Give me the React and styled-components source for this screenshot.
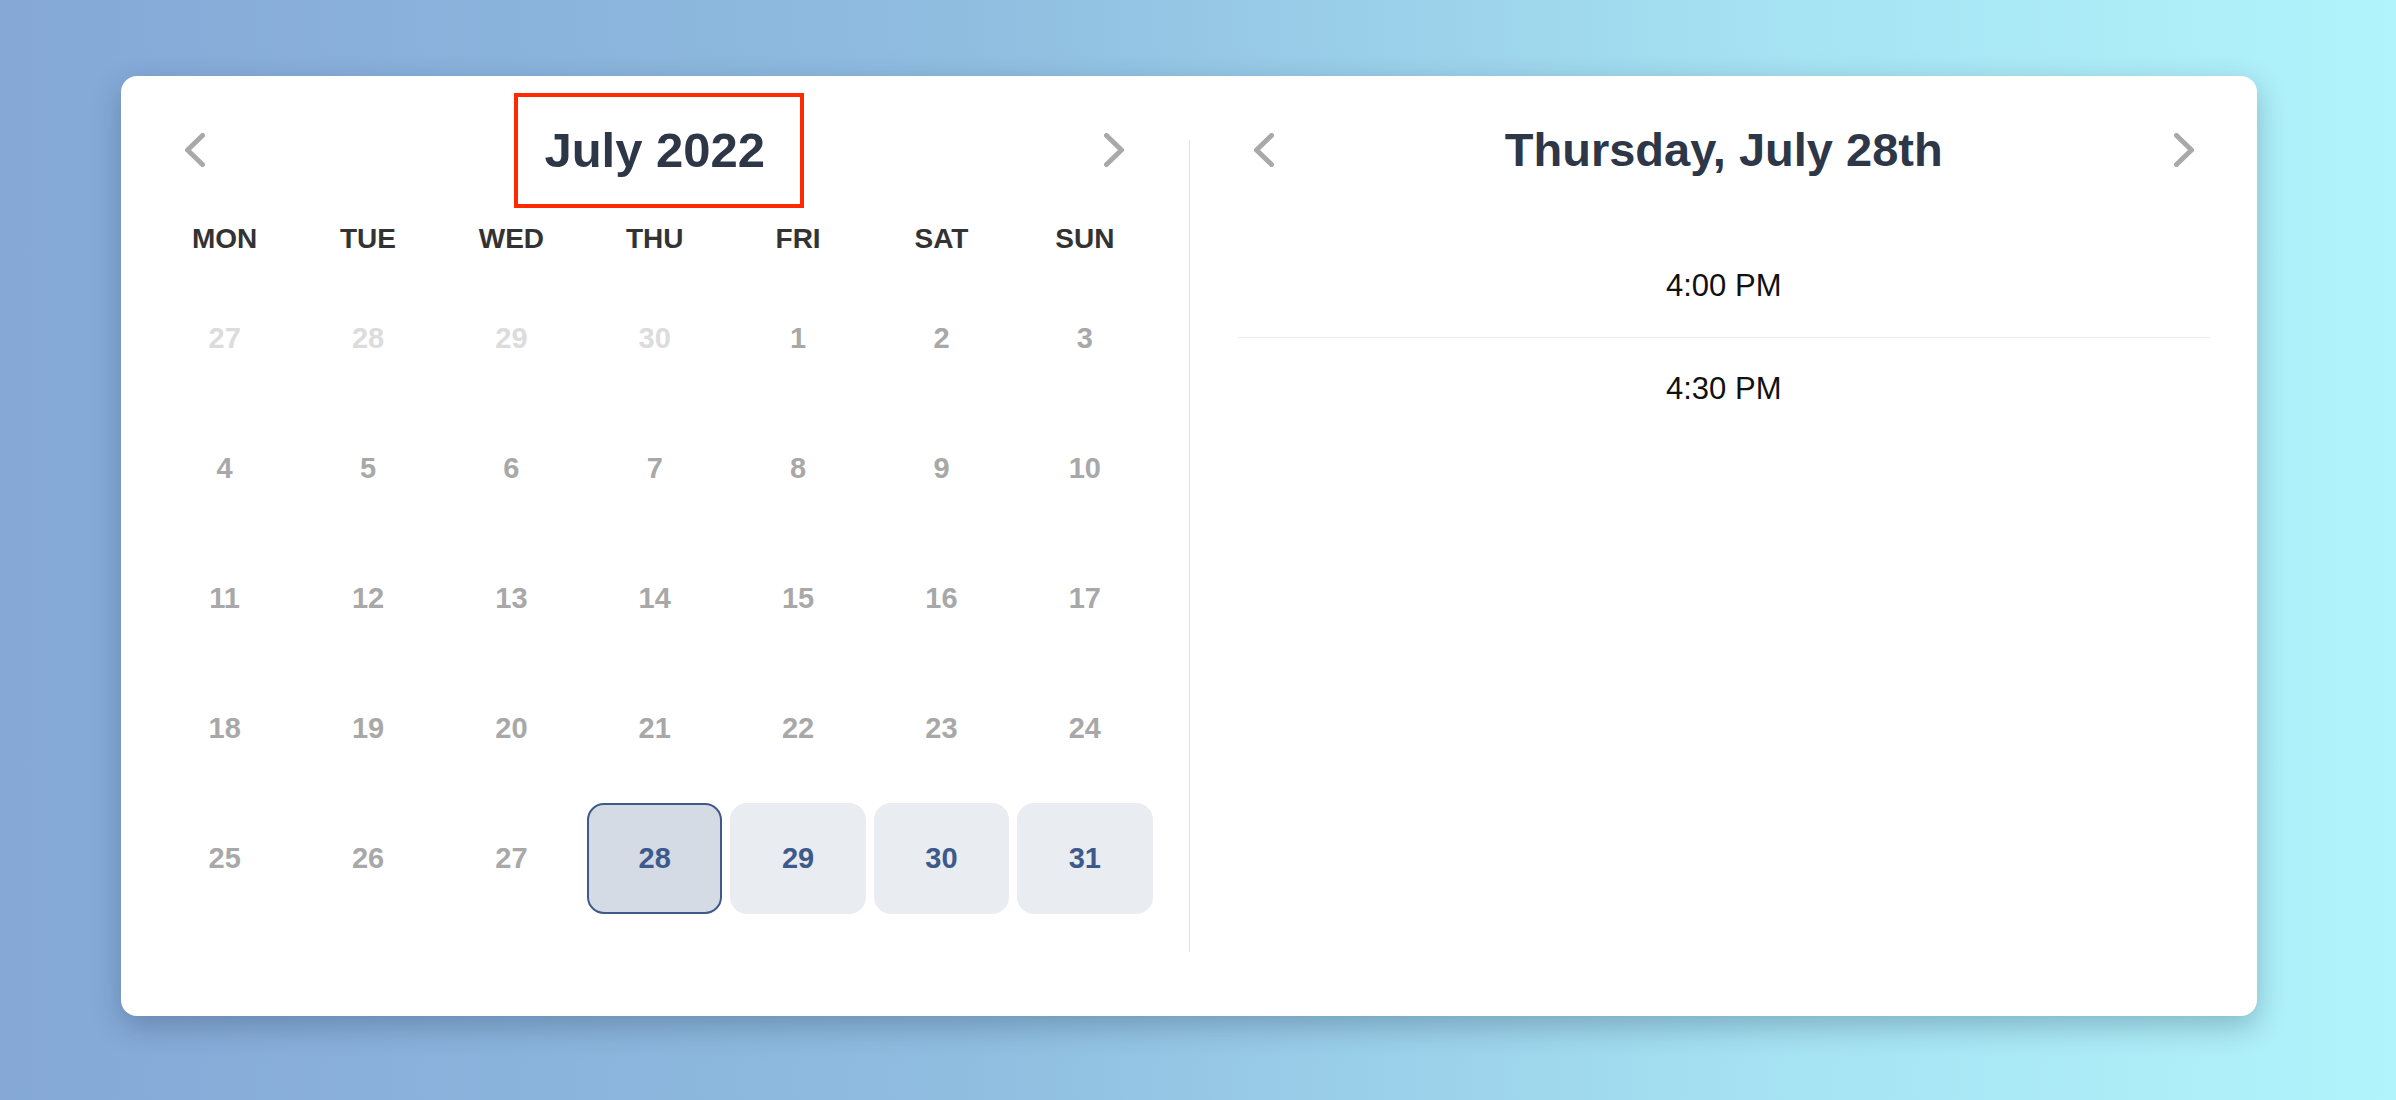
import React from 'react';
import styled, {createGlobalStyle, css} from 'styled-components';

const GlobalStyle = createGlobalStyle`
  body {
    margin: 0;
    font-family: "Liberation Sans", Arial, Helvetica, sans-serif;
  }
`

const weekdays = ['MON', 'TUE', 'WED', 'THU', 'FRI', 'SAT', 'SUN']

const buildDays = () => {
    const days = [27, 28, 29, 30].map(n => ({n, kind: 'muted'}))
    for (let n = 1; n <= 31; n++) {
        let kind = 'past'
        if (n === 28) kind = 'selected'
        else if (n > 28) kind = 'available'
        days.push({n, kind})
    }
    return days
}

const slots = ['4:00 PM', '4:30 PM']

const Chevron = ({dir}) => (
    <svg width="20" height="34" viewBox="0 0 20 34" fill="none">
        <polyline
            points={dir === 'left' ? '17.5,2.5 2.5,17 17.5,31.5' : '2.5,2.5 17.5,17 2.5,31.5'}
            stroke="#a9a9a9"
            strokeWidth="5"
            strokeLinecap="round"
            strokeLinejoin="round"
        />
    </svg>
)

const Header = ({title, marked, inset, size}) => (
    <HeaderRow $inset={inset}>
        <NavButton><Chevron dir="left"/></NavButton>
        <Title $marked={marked} $size={size}>{title}</Title>
        <NavButton><Chevron dir="right"/></NavButton>
    </HeaderRow>
)

const App = () => {
    const days = buildDays()

    return (
        <Page>
            <GlobalStyle/>
            <Card>
                <LeftPanel>
                    <Header title="July 2022" marked inset={28} size={49}/>
                    <WeekRow>
                        {weekdays.map(d => <Weekday key={d}>{d}</Weekday>)}
                    </WeekRow>
                    <DayGrid>
                        {days.map((d, i) => <Day key={i} $kind={d.kind}>{d.n}</Day>)}
                    </DayGrid>
                </LeftPanel>
                <Divider/>
                <RightPanel>
                    <Header title="Thursday, July 28th" inset={16} size={47}/>
                    <SlotList>
                        {slots.map(s => <Slot key={s}>{s}</Slot>)}
                    </SlotList>
                </RightPanel>
            </Card>
        </Page>
    );
};

const Page = styled.div`
  box-sizing: border-box;
  width: 2396px;
  height: 1100px;
  padding: 76px 139px 0 121px;
  background: linear-gradient(90deg, #85a8d7 0%, #8fbde0 40%, #a6e3f3 75%, #b1f4fb 100%);
  overflow: hidden;
`

const Card = styled.div`
  display: grid;
  grid-template-columns: minmax(0, 1fr) 1px minmax(0, 1fr);
  width: 2136px;
  height: 940px;
  background: #fff;
  border-radius: 16px;
  box-shadow: 0 10px 30px rgba(20, 40, 70, 0.28);
`

const LeftPanel = styled.section`
  padding: 44px 36px 0;
`

const RightPanel = styled.section`
  padding: 44px 47px 0 48px;
`

const Divider = styled.div`
  margin: 64px 0;
  background: #e3e3e3;
`

const HeaderRow = styled.div`
  display: flex;
  align-items: center;
  justify-content: space-between;
  height: 60px;
  padding: 0 ${p => p.$inset}px;
`

const NavButton = styled.button`
  display: flex;
  padding: 0;
  border: none;
  background: none;
  cursor: pointer;
`

const Title = styled.h2`
  position: relative;
  margin: 0;
  font-size: ${p => p.$size}px;
  line-height: 60px;
  font-weight: 700;
  color: #2d3748;

  ${p => p.$marked && css`
    &::after {
      content: '';
      position: absolute;
      inset: -27px -39px -28px -30px;
      border: 4px solid #ff2a00;
    }
  `}
`

const WeekRow = styled.div`
  display: grid;
  grid-template-columns: repeat(7, 1fr);
  column-gap: 8px;
  margin-top: 42px;
`

const Weekday = styled.div`
  text-align: center;
  font-size: 28px;
  line-height: 34px;
  font-weight: 700;
  color: #333;
`

const DayGrid = styled.div`
  display: grid;
  grid-template-columns: repeat(7, 1fr);
  grid-auto-rows: 111px;
  column-gap: 8px;
  row-gap: 19px;
  margin-top: 27px;
`

const dayStyles = {
    muted: css`color: #dcdcdc;`,
    past: css`color: #a8a8a8;`,
    available: css`
      color: #3d5a8a;
      background: #e9ecf1;
      cursor: pointer;
    `,
    selected: css`
      color: #3d5a8a;
      background: #d4dbe5;
      border: 2px solid #3d5a8a;
      cursor: pointer;
    `,
}

const Day = styled.div`
  box-sizing: border-box;
  display: flex;
  align-items: center;
  justify-content: center;
  border-radius: 17px;
  font-size: 29px;
  font-weight: 700;
  ${p => dayStyles[p.$kind]}
`

const SlotList = styled.div`
  margin-top: 55px;
`

const Slot = styled.div`
  display: flex;
  align-items: center;
  justify-content: center;
  height: 102px;
  font-size: 31px;
  color: #111;

  & + & {
    border-top: 1px solid #ebebeb;
  }
`

export default App;
